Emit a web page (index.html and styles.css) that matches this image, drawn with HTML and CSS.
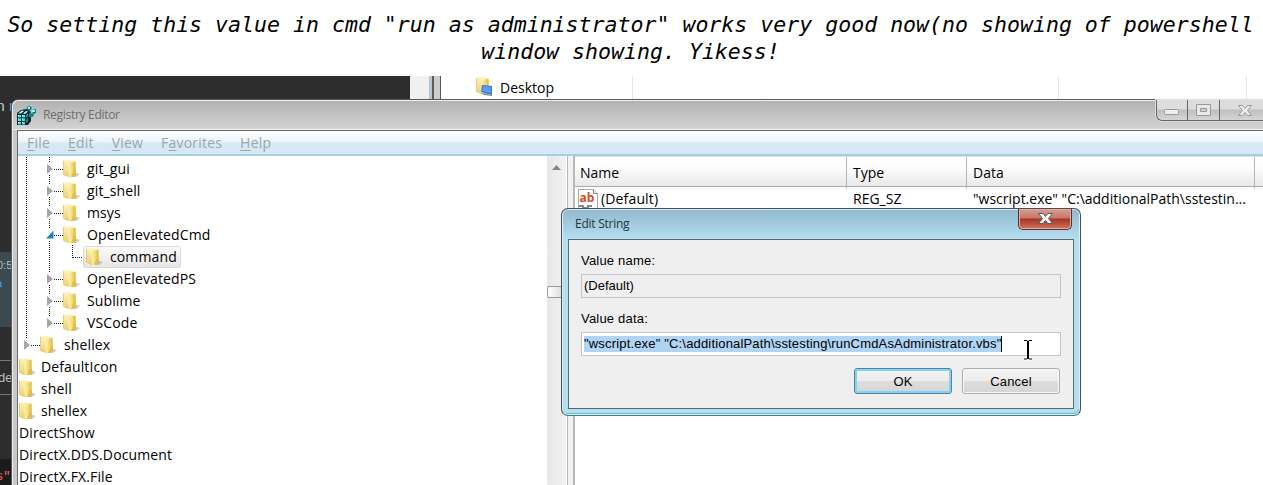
FILE: index.html
```html
<!DOCTYPE html>
<html lang="en">
<head>
<meta charset="utf-8">
<title>Registry Editor</title>
<link rel="stylesheet" href="styles.css">
</head>
<body>
<svg class="defs" width="0" height="0">
  <defs>
    <linearGradient id="fg"><stop offset="0" stop-color="#fcf3b8"/><stop offset=".55" stop-color="#f0dc7d"/><stop offset="1" stop-color="#dcb940"/></linearGradient>
    <linearGradient id="bg" x2="0" y2="1"><stop offset="0" stop-color="#fff4ba"/><stop offset="1" stop-color="#edd070"/></linearGradient>
    <symbol id="folder" viewBox="0 0 17 18">
      <path d="M11 12l6 2-4 3H6z" fill="#aaa" opacity=".6"/>
      <path d="M0 .5l7-.5 6 2v13.500l-7 1.500-6-2z" fill="url(#bg)"/>
      <path d="M5 3.500L12.500 1.500V15L6 17.500z" fill="url(#fg)"/>
      <path d="M10.500 11l2.500-1v6l-5 1z" fill="#e4bd44"/>
      <path d="M.5 1v13l5 2.500" fill="none" stroke="#e5cc7a"/>
    </symbol>
    <symbol id="closed" viewBox="0 0 8 12"><path d="M1 1l6 5-6 5z" fill="#a6a6a6"/></symbol>
    <symbol id="open" viewBox="0 0 8 12"><path d="M7.500 1.500v8H0z" fill="#1d83bd"/></symbol>
  </defs>
</svg>
<h1 class="headline">So setting this value in cmd "run as administrator" works very good now(no showing of powershell<br>window showing. Yikess!</h1>
<main class="desktop">
  <div class="backdrop">
    <div class="editor">
      <div class="ed-top">n<b> r</b></div>
      <div class="ed-sel"><span>0:5</span><i>a</i></div>
      <div class="ed-gap"></div>
      <div class="ed-mid">de</div>
      <div class="ed-low"></div>
      <div class="ed-code">s"</div>
    </div>
    <div class="edge"></div>
    <div class="explorer">
      <div class="exp-name">
        <svg width="17" height="21" viewBox="0 0 17 21"><use href="#folder" width="17" height="18"/><path d="M6 8l10 1v9l-11-3z" fill="#3976d2"/><path d="M7 9l8 1v6l-9-2z" fill="#5d9cf0"/><path d="M5 16l11 2v1l-8-1z" fill="#75809a"/></svg>
        <span>Desktop</span>
      </div>
      <div class="exp-col wide"></div><div class="exp-col"></div>
    </div>
  </div>

  <section class="window">
    <header class="titlebar">
      <svg class="appicon" width="20" height="20" viewBox="0 0 20 20">
        <path d="M0 7l4-3 6-1 4 3v9l-3 4H0z" fill="#05282b"/>
        <path d="M1 7.500l4-3 2 .5-3 2.500zM6 7.500l3-2.500 2 .5-3 2.500z" fill="#b5fbfc"/>
        <path d="M1 9h3v2.500H1zM5 9h3v2.500H5zM1 12.500h3V15H1zM5 12.500h3V15H5zM1 16h3v2.500H1zM5 16h3v2.500H5z" fill="#3fe6ea"/>
        <path d="M1 9h1v1H1zM5 9h1v1H5zM1 12.500h1v1H1zM5 12.500h1v1H5zM1 16h1v1H1zM5 16h1v1H5z" fill="#fff"/>
        <path d="M9 9l2-2v3l-2 2zM9 14l2-2v3l-2 2zM12 8l2-2v4l-2 2z" fill="#139a9e"/>
        <path d="M10 1l3-1 2 2-2 3-3-1zM15 4l4-1v4l-3 1zM13 8l3-1 1 3-3 1z" fill="#087b80"/>
        <path d="M11 1h2v2h-2zM15 4h3v2h-3z" fill="#8ffcff"/>
      </svg>
      <span class="apptitle">Registry Editor</span>
      <div class="controls">
        <span><svg width="30" height="20"><rect x="7.500" y="9.500" width="14" height="5" rx="1" fill="#eee" stroke="#999"/></svg></span>
        <span><svg width="31" height="20"><path d="M8.500 4.500h14v11h-14z" fill="#e8e8e8" stroke="#999"/><path d="M12.500 8.500h6v3h-6z" fill="#ccc" stroke="#999"/></svg></span>
        <span><svg width="48" height="20"><path d="M18.500 5.500h4l2.500 3 2.500-3h4L27.500 10.500l4 5h-4L25 12.500l-2.500 3h-4l4-5z" fill="#eee" stroke="#999"/></svg></span>
      </div>
    </header>
    <div class="client">
      <nav class="menu"><span><u>F</u>ile</span><span><u>E</u>dit</span><span><u>V</u>iew</span><span>F<u>a</u>vorites</span><span><u>H</u>elp</span></nav>
      <div class="panes">
        <div class="tree">
          <svg class="lines" width="70" height="200"><path d="M8.500 1v183M31.500 1v167M36 13.500h9M36 35.500h9M36 57.500h9M36 79.500h9M55 101.500h13M54.500 89v13M36 123.500h9M36 145.500h9M36 167.500h9M13 189.500h9" fill="none" stroke="#222" stroke-dasharray="1 1"/></svg>
          <div class="node l2"><svg class="arrow"><use href="#closed"/></svg><svg class="folder"><use href="#folder"/></svg><span>git_gui</span></div>
          <div class="node l2"><svg class="arrow"><use href="#closed"/></svg><svg class="folder"><use href="#folder"/></svg><span>git_shell</span></div>
          <div class="node l2"><svg class="arrow"><use href="#closed"/></svg><svg class="folder"><use href="#folder"/></svg><span>msys</span></div>
          <div class="node l2"><svg class="arrow"><use href="#open"/></svg><svg class="folder"><use href="#folder"/></svg><span>OpenElevatedCmd</span></div>
          <div class="node l3"><div class="picked"><svg class="folder"><use href="#folder"/></svg><span>command</span></div></div>
          <div class="node l2"><svg class="arrow"><use href="#closed"/></svg><svg class="folder"><use href="#folder"/></svg><span>OpenElevatedPS</span></div>
          <div class="node l2"><svg class="arrow"><use href="#closed"/></svg><svg class="folder"><use href="#folder"/></svg><span>Sublime</span></div>
          <div class="node l2"><svg class="arrow"><use href="#closed"/></svg><svg class="folder"><use href="#folder"/></svg><span>VSCode</span></div>
          <div class="node l1"><svg class="arrow"><use href="#closed"/></svg><svg class="folder"><use href="#folder"/></svg><span>shellex</span></div>
          <div class="node l0"><svg class="folder"><use href="#folder"/></svg><span>DefaultIcon</span></div>
          <div class="node l0"><svg class="folder"><use href="#folder"/></svg><span>shell</span></div>
          <div class="node l0"><svg class="folder"><use href="#folder"/></svg><span>shellex</span></div>
          <div class="node root"><span>DirectShow</span></div>
          <div class="node root"><span>DirectX.DDS.Document</span></div>
          <div class="node root"><span>DirectX.FX.File</span></div>
        </div>
        <div class="scroll"><svg width="19" height="20"><path d="M5 14l4.500-5 4.500 5z" fill="#858585"/></svg><div class="thumb"></div></div>
        <div class="splitter"></div>
        <div class="list">
          <div class="cols"><span>Name</span><span>Type</span><span>Data</span><span></span></div>
          <div class="row">
            <span class="valname"><svg width="20" height="20" viewBox="0 0 20 20"><path d="M.5.500h15l4 4v15H.5z" fill="#fff" stroke="#aaa"/><path d="M15.500.500v4h4" fill="#eee" stroke="#888"/><text x="1.500" y="12.500" class="ab">ab</text><path d="M1 17h4v2h5v-2h4" fill="none" stroke="#888" stroke-width="2"/></svg>(Default)</span>
            <span>REG_SZ</span>
            <span class="data">"wscript.exe" "C:\additionalPath\sstestin...</span>
          </div>
        </div>
      </div>
    </div>
  </section>

  <section class="dialog">
    <header class="dtitle"><span>Edit String</span>
      <div class="close"><svg width="52" height="20"><path d="M19.500 4.500h4.500l2.500 3 2.500-3h4.500L29.500 9.500l4 5H29l-2.500-3-2.500 3h-4.500l4-5z" fill="#f5f5f5" stroke="#555b66"/></svg></div>
    </header>
    <div class="form">
      <label>Value name:</label>
      <div class="field off"><span>(Default)</span></div>
      <label>Value data:</label>
      <div class="field"><span class="selected">"wscript.exe" "C:\additionalPath\sstesting\runCmdAsAdministrator.vbs"</span></div>
      <div class="buttons"><button class="btn focus">OK</button><button class="btn">Cancel</button></div>
    </div>
  </section>
  <svg class="cursor" width="10" height="22" viewBox="0 0 10 22"><path d="M1 1.500h3l1 1 1-1h3M5 2v17M1 20h3l1-1 1 1h3" fill="none" stroke="#fff" stroke-width="3"/><path d="M1 1.500h3l1 1 1-1h3M1 20h3l1-1 1 1h3" fill="none" stroke="#000"/><path d="M5 2v17" stroke="#000" stroke-width="2"/></svg>
</main>
</body>
</html>
```
FILE: styles.css
```css
* { box-sizing: border-box; }
body { margin: 0; width: 1263px; height: 485px; overflow: hidden; background: #fff; color: #000; font-family: "Open Sans", "Noto Sans", sans-serif; font-size: 14px; }
svg { display: block; flex: none; }
.defs { position: absolute; }
.headline { margin: 0; height: 76px; padding: 11px 2px 0 0; text-align: center; white-space: nowrap; font: italic 400 21.570px/27px "DejaVu Sans Mono", monospace; }
.desktop { position: relative; height: 409px; overflow: hidden; }
.backdrop { display: flex; height: 409px; }

.editor { width: 410px; background: #2d2d2d; display: flex; flex-direction: column; font: 12px/16px "Liberation Mono", monospace; color: #b8bdc2; white-space: nowrap; }
.ed-top { height: 177px; padding-top: 24px; font-size: 15px; text-indent: -4px; color: #d0cbb8; }
.ed-top b { color: #4aa3e8; font-weight: 400; letter-spacing: -6px; }
.ed-sel { height: 75px; background: #3d4951; padding-top: 4px; text-indent: -3px; font: 11px/18px "Liberation Sans", sans-serif; }
.ed-sel i { display: block; color: #3f8fff; font-style: normal; font-weight: 700; text-indent: -4px; }
.ed-gap { height: 33px; }
.ed-mid { height: 36px; border: solid #777; border-width: 1px 0; padding-top: 9px; font: 13px/16px "Liberation Sans", sans-serif; text-indent: -2px; }
.ed-low { height: 64px; }
.ed-code { flex: 1; background: #1b1b1b; color: #e8705c; padding-top: 10px; text-indent: -4px; }
.edge { width: 31px; background: linear-gradient(90deg, #f0f0f0 0 19px, #b9c5cf 19px 22px, #5b5b60 22px 24px, #ccc 24px 30px, #555 30px); }
.explorer { flex: 1; display: flex; }
.exp-name { width: 192px; padding: 0 0 1px 35px; height: 24px; display: flex; align-items: center; gap: 7px; border-right: 1px solid #d9e8f5; }
.exp-col { width: 188px; height: 24px; border-right: 1px solid #e6e6e6; }
.exp-col.wide { width: 426px; }

.window { position: absolute; left: 11px; top: 23px; width: 1300px; height: 430px; padding: 0 6px; border: 1px solid #55595a; border-radius: 7px 0 0 0; background: #c8c8c8; box-shadow: inset 1px 1px 0 #eee; }
.titlebar { height: 29px; margin: 1px -5px 0; padding-left: 4px; display: flex; background: linear-gradient(#b2b2b2, #d3d3d3); border-radius: 6px 0 0; border-bottom: 1px solid #eee; }
.appicon { margin-top: 5px; }
.apptitle { margin: 5px 0 0 6px; font-size: 12px; line-height: 18px; color: #6d6d6d; letter-spacing: -.3px; width: 1113px; }
.controls { display: flex; height: 21px; margin-top: -1px; border: 1px solid #62676a; border-top: 0; border-radius: 0 0 0 6px; box-shadow: 0 0 0 1px #ddd; background: linear-gradient(#ddd 45%, #bfbfbf 50%, #d5d5d5); }
.controls span + span { border-left: 1px solid #62676a; }
.client { border: solid #686b6d; border-width: 1px 0 0 1px; margin-left: -1px; background: #fff; }
.menu { height: 25px; background: linear-gradient(#fff, #eaf3fa 11px, #d6e7f5 12px); border-bottom: 2px solid #a8cde2; padding-left: 9px; display: flex; gap: 18px; line-height: 23px; letter-spacing: .2px; color: #9ea4ab; }
.menu u { text-decoration-thickness: 1px; text-underline-offset: 2px; }
.panes { display: flex; height: 340px; }
.tree { position: relative; width: 529px; padding-top: 2px; }
.lines { position: absolute; left: 0; top: 0; }
.node { position: relative; height: 22px; display: flex; align-items: center; line-height: 20px; letter-spacing: .12px; }
.node.l2 { padding-left: 28px; }
.node.l1 { padding-left: 5px; }
.node.l3 { padding-left: 65px; }
.node.root { padding-left: 1px; }
.l0 .folder { margin-left: 1px; }
.l0 span { margin-left: 5px; }
.arrow { width: 8px; height: 12px; margin-right: 9px; background: #fff; }
.folder { width: 17px; height: 18px; margin-right: 0; }
.l2 > span, .l1 > span { margin-left: 7px; }
.picked { display: flex; align-items: center; height: 22px; width: 98px; padding-left: 2px; gap: 7px; border: 1px solid #d9d9d9; border-radius: 3px; background: linear-gradient(#fafafa, #e7e7e7); }
.scroll { width: 19px; background: linear-gradient(90deg, #e7e7e7, #f2f2f2); }
.thumb { margin-top: 110px; height: 12px; border: 1px solid #999; border-radius: 2px; background: linear-gradient(90deg, #fff, #d4d4d4); }
.splitter { width: 7px; border: 1px solid #b8b8b8; border-width: 0 1px; background: #f2f2f2; margin-left: 1px; }
.list { flex: 1; border-left: 1px solid #bbb; }
.cols { display: grid; grid-template-columns: 272px 120px 288px 1fr; height: 31px; line-height: 32px; border-bottom: 1px solid #aaa; border-top: 1px solid #ddd; background: linear-gradient(#fff, #fbfbfb 45%, #e8e8e8); }
.cols span { padding-left: 5px; border-right: 1px solid #b6b6b6; }
.cols span + span, .row > span + span { padding-left: 6px; }
.row { display: grid; grid-template-columns: 272px 120px 1fr; line-height: 24px; }
.row .valname { display: flex; padding-left: 3px; gap: 3px; letter-spacing: .15px; }
.valname svg { margin-top: 2px; }
.ab { font: 700 12px "Open Sans", sans-serif; letter-spacing: 0; fill: #d84a25; }

.dialog { position: absolute; left: 561px; top: 132px; width: 520px; height: 208px; padding: 0 6px; border: 1px solid #484e55; border-bottom-color: #3b8083; border-radius: 7px; background: linear-gradient(#91b8cd, #b4dff0 30px); box-shadow: inset 0 0 0 1px #daf0f8, inset -1px -2px 0 #59c5cc; font-family: "Liberation Sans", Arial, sans-serif; font-size: 13px; }
.dtitle { height: 30px; display: flex; justify-content: space-between; padding-left: 7px; font: 12px/29px "Open Sans", sans-serif; letter-spacing: -.25px; color: #26343d; }
.close { width: 54px; height: 21px; margin-right: 2px; border: 1px solid #5a3038; border-top: 0; border-radius: 0 0 5px 5px; background: linear-gradient(#d99c91, #c57969 45%, #a63523 50%, #d2745b); box-shadow: inset 0 0 0 1px #e6aaa0; }
.form { height: 170px; padding: 12px 12px 0; background: #efefef; border: 1px solid #61696f; display: flex; flex-direction: column; }
.form label { height: 22px; line-height: 18px; letter-spacing: .2px; }
.field { height: 24px; border: 1px solid #c4c4c4; background: #fff; padding: 3px 2px 0; line-height: 16px; margin-bottom: 12px; white-space: nowrap; flex: none; }
.field.off { background: #efefef; }
.selected { display: inline-block; background: #b0d4f3; border-right: 1px solid #000; height: 16px; letter-spacing: .17px; }
.buttons { display: flex; justify-content: flex-end; gap: 10px; padding-right: 1px; }
.btn { width: 98px; height: 26px; padding: 0; border: 1px solid #adadad; border-radius: 3px; font: 13px "Liberation Sans", sans-serif; letter-spacing: .2px; color: #000; background: linear-gradient(#f3f3f3, #ececec 48%, #dedede 50%, #d5d5d5); box-shadow: inset 0 0 0 1px #f8f8f8; }
.btn.focus { border-color: #3f89ac; box-shadow: inset 0 0 0 2px #8bd0ea; }
.cursor { position: absolute; left: 1023px; top: 263px; }
```
